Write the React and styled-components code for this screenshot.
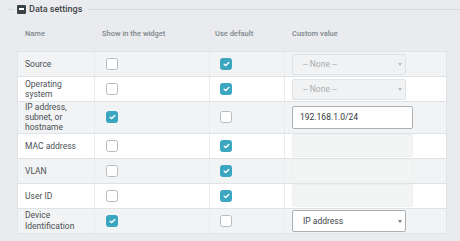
import { styled, createGlobalStyle } from "styled-components";

const GlobalStyle = createGlobalStyle`
  body {
    margin: 0;
    background: #e9ebee;
    font-family: Roboto, "Liberation Sans", sans-serif;
  }
`;

const COLS = "77px 115px 75px 161px";

const Page = styled.div`
  padding-top: 2px;
  width: 460px;
`;
const LegendRow = styled.div`
  display: flex;
  align-items: center;
  height: 14px;
`;
const Line = styled.div`
  height: 1px;
  background: #d6d9dc;
  width: ${(p) => (p.$grow ? "auto" : "7px")};
  flex: ${(p) => (p.$grow ? 1 : "none")};
  margin-left: ${(p) => (p.$grow ? "0" : "7px")};
`;
const Toggle = styled.span`
  width: 9px;
  height: 9px;
  margin: 0 3px 0 3px;
  border-radius: 1px;
  background: #3b4246;
  display: flex;
  align-items: center;
  justify-content: center;
  &::after {
    content: "";
    width: 5px;
    height: 1.5px;
    background: #fff;
  }
`;
const LegendText = styled.span`
  font-size: 9px;
  font-weight: 500;
  color: #3f464a;
  padding-right: 6px;
`;
const Table = styled.div`
  margin-left: 17px;
  width: 430px;
`;
const HeadRow = styled.div`
  display: grid;
  grid-template-columns: ${COLS};
  height: 35px;
  align-items: center;
  padding-left: 1px;
`;
const HeadCell = styled.div`
  font-size: 7.5px;
  font-weight: 500;
  color: #80878b;
  padding-left: ${(p) => (p.$pad ? p.$pad : 7)}px;
`;
const Body = styled.div`
  border: 1px solid #e0e3e6;
  border-bottom: none;
`;
const Row = styled.div`
  display: grid;
  grid-template-columns: ${COLS};
  min-height: 24px;
  background: ${(p) => (p.$alt ? "#f2f3f4" : "#fff")};
  border-bottom: 1px solid #e0e3e6;
`;
const Cell = styled.div`
  display: flex;
  align-items: center;
  padding: 0 ${(p) => (p.$pad ? p.$pad : 7)}px;
  border-right: ${(p) => (p.$last ? "none" : "1px solid #e9ebed")};
  font-size: 8.5px;
  line-height: 10.2px;
  color: #4b5155;
`;
const Box = styled.span`
  box-sizing: border-box;
  width: 12px;
  height: 12px;
  border-radius: 2.5px;
  border: 1px solid ${(p) => (p.$on ? "#3aa6bf" : "#b6bdc1")};
  background: ${(p) => (p.$on ? "#3aa6bf" : "#fff")};
  display: flex;
  align-items: center;
  justify-content: center;
`;
const Select = styled.div`
  box-sizing: border-box;
  position: relative;
  width: 114px;
  height: ${(p) => (p.$disabled ? 21 : 22)}px;
  border-radius: 2px;
  border: 1px solid ${(p) => (p.$disabled ? "#e0e3e5" : "#a9afb3")};
  background: ${(p) => (p.$disabled ? "#f1f2f3" : "#fff")};
  color: ${(p) => (p.$disabled ? "#a8adb0" : "#3f4549")};
  font-size: 8.5px;
  display: flex;
  align-items: center;
  padding-left: 10px;
  &::after {
    content: "";
    position: absolute;
    right: 3px;
    top: 50%;
    margin-top: -1px;
    border-left: 2.5px solid transparent;
    border-right: 2.5px solid transparent;
    border-top: 3px solid ${(p) => (p.$disabled ? "#b9bdc0" : "#7b8185")};
  }
`;
const Input = styled.div`
  box-sizing: border-box;
  width: 121px;
  height: 23px;
  border-radius: 2px;
  border: 1px solid ${(p) => (p.$disabled ? "#eef0f0" : "#a9afb3")};
  background: ${(p) => (p.$disabled ? "#f3f4f4" : "#fff")};
  color: #33393d;
  font-size: 8.5px;
  display: flex;
  align-items: center;
  padding-left: 7px;
`;

function Check({ on }) {
  return (
    <Box $on={on}>
      {on && (
        <svg width="7" height="6" viewBox="0 0 7 6">
          <path d="M1.2 3.2 L2.8 4.6 L5.8 1.4" fill="none" stroke="#fff" strokeWidth="1.4" strokeLinecap="round" strokeLinejoin="round" />
        </svg>
      )}
    </Box>
  );
}

const rows = [
  { name: "Source", show: false, def: true, value: { type: "select", disabled: true, text: "-- None --" } },
  { name: ["Operating", "system"], show: false, def: true, value: { type: "select", disabled: true, text: "-- None --" } },
  { name: ["IP address,", "subnet, or", "hostname"], show: true, def: false, value: { type: "input", text: "192.168.1.0/24" } },
  { name: "MAC address", show: false, def: true, value: { type: "input", disabled: true, text: "" } },
  { name: "VLAN", show: false, def: true, value: { type: "input", disabled: true, text: "" } },
  { name: "User ID", show: false, def: true, value: { type: "input", disabled: true, text: "" } },
  { name: ["Device", "Identification"], show: true, def: false, value: { type: "select", text: "IP address" } },
];

export default function App() {
  return (
    <Page>
      <GlobalStyle />
      <LegendRow>
        <Line />
        <Toggle />
        <LegendText>Data settings</LegendText>
        <Line $grow />
      </LegendRow>
      <Table>
        <HeadRow>
          <HeadCell>Name</HeadCell>
          <HeadCell>Show in the widget</HeadCell>
          <HeadCell $pad={5}>Use default</HeadCell>
          <HeadCell>Custom value</HeadCell>
        </HeadRow>
        <Body>
          {rows.map((r, i) => (
            <Row key={i} $alt={i % 2 === 0}>
              <Cell>
                <div>
                  {Array.isArray(r.name)
                    ? r.name.map((l) => <div key={l}>{l}</div>)
                    : r.name}
                </div>
              </Cell>
              <Cell $pad={11}>
                <Check on={r.show} />
              </Cell>
              <Cell $pad={10}>
                <Check on={r.def} />
              </Cell>
              <Cell $last>
                {r.value.type === "select" ? (
                  <Select $disabled={r.value.disabled}>{r.value.text}</Select>
                ) : (
                  <Input $disabled={r.value.disabled}>{r.value.text}</Input>
                )}
              </Cell>
            </Row>
          ))}
        </Body>
      </Table>
    </Page>
  );
}
